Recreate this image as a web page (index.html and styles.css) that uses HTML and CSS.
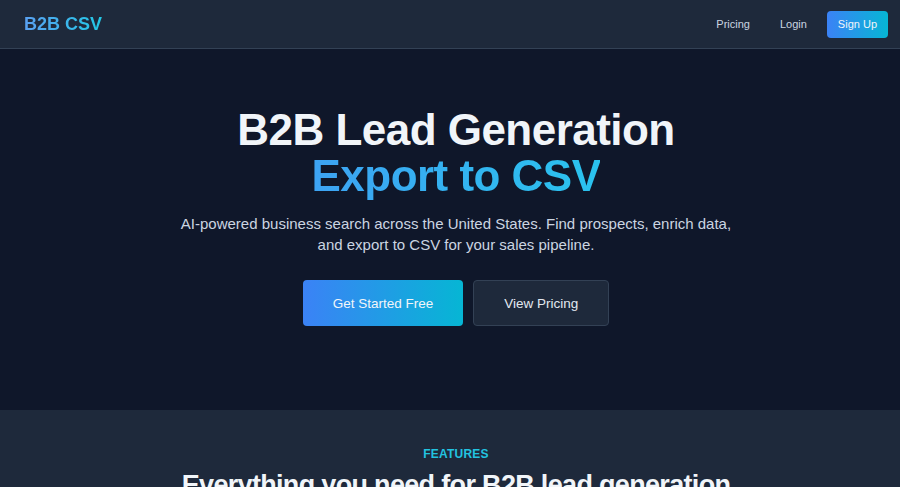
FILE: index.html
```html
<!DOCTYPE html>
<html lang="en">
<head>
<meta charset="utf-8">
<title>B2B CSV</title>
<link rel="stylesheet" href="styles.css">
</head>
<body>
<header class="nav">
  <a class="logo" href="#">B2B CSV</a>
  <nav class="nav-links">
    <a class="nav-link" href="#">Pricing</a>
    <a class="nav-link" href="#">Login</a>
    <a class="btn-signup" href="#">Sign Up</a>
  </nav>
</header>
<section class="hero">
  <h1 class="hero-title">B2B Lead Generation<br><span class="grad-text">Export to CSV</span></h1>
  <p class="hero-sub">AI-powered business search across the United States. Find prospects, enrich data,<br>and export to CSV for your sales pipeline.</p>
  <div class="hero-actions">
    <a class="btn btn-primary" href="#">Get Started Free</a>
    <a class="btn btn-secondary" href="#">View Pricing</a>
  </div>
</section>
<section class="features">
  <div class="features-label">FEATURES</div>
  <h2 class="features-title">Everything you need for B2B lead generation</h2>
</section>
</body>
</html>
```
FILE: styles.css
```css
* { box-sizing: border-box; }
html, body { margin: 0; padding: 0; }
body {
  font-family: "Liberation Sans", Arial, sans-serif;
  background: #0f172a;
  color: #f1f5f9;
  overflow: hidden;
  height: 487px;
}
a { text-decoration: none; }

.nav {
  height: 49px;
  background: #1e293b;
  border-bottom: 1px solid #334155;
  display: flex;
  align-items: center;
  justify-content: space-between;
  padding: 0 12px 0 24px;
}
.logo {
  font-size: 18px;
  font-weight: 700;
  background: linear-gradient(90deg, #5aa0f2, #22c8e6);
  -webkit-background-clip: text;
  background-clip: text;
  color: transparent;
  padding-top: 1px;
}
.nav-links {
  display: flex;
  align-items: center;
  gap: 10px;
}
.nav-link {
  font-size: 11px;
  color: #cbd5e1;
  padding: 0 10px;
}
.btn-signup {
  font-size: 11px;
  color: #f1f5f9;
  background: linear-gradient(90deg, #3b82f6, #06b6d4);
  border-radius: 4px;
  height: 27px;
  padding: 0 11px;
  display: flex;
  align-items: center;
}

.hero {
  padding: 58px 0 84px 12px;
  text-align: center;
  background: #0f172a;
}
.hero-title {
  margin: 0;
  font-size: 44px;
  line-height: 46px;
  font-weight: 700;
  letter-spacing: -0.012em;
  color: #f1f5f9;
}
.grad-text {
  background: linear-gradient(90deg, #3da3f3, #2ac3ee);
  -webkit-background-clip: text;
  background-clip: text;
  color: transparent;
}
.hero-sub {
  margin: 14px 0 0;
  font-size: 15px;
  line-height: 21px;
  color: #cbd5e1;
}
.hero-actions {
  margin-top: 25px;
  display: flex;
  justify-content: center;
  gap: 10px;
}
.btn {
  height: 46px;
  display: flex;
  align-items: center;
  justify-content: center;
  font-size: 13.5px;
  border-radius: 4px;
  padding: 0 30px;
  white-space: nowrap;
}
.btn-primary {
  background: linear-gradient(90deg, #3b82f6, #06b6d4);
  color: #f1f5f9;
}
.btn-secondary {
  background: #1e293b;
  border: 1px solid #334155;
  color: #e2e8f0;
}

.features {
  background: #1e293b;
  padding: 36px 0 0 12px;
  text-align: center;
  height: 200px;
}
.features-label {
  font-size: 12px;
  line-height: 16px;
  font-weight: 700;
  letter-spacing: 0.02em;
  color: #22c3e0;
}
.features-title {
  margin: 7px 0 0;
  font-size: 27px;
  line-height: 32px;
  font-weight: 700;
  letter-spacing: -0.025em;
  color: #f1f5f9;
  white-space: nowrap;
}
```
